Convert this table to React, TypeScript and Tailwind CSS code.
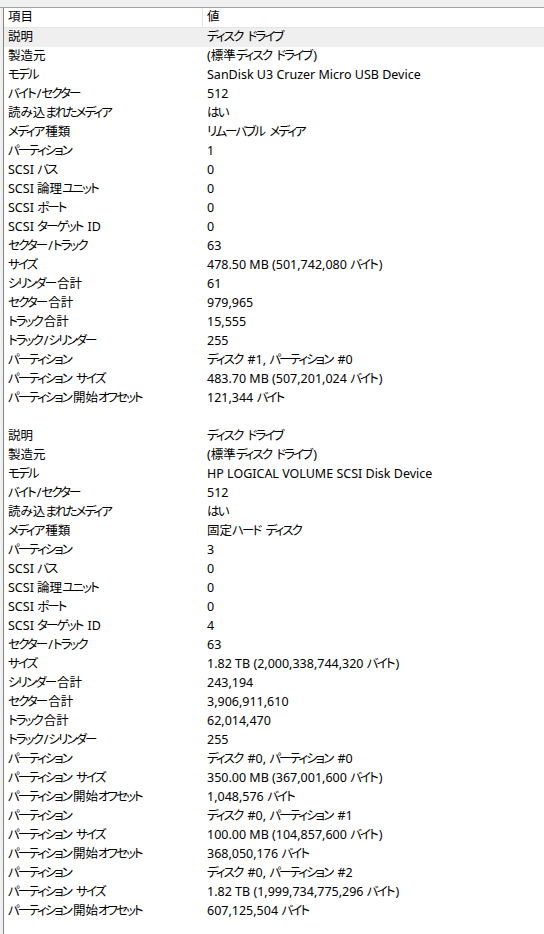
import React from "react";

type Row = [string, string];

const block1: Row[] = [
  ["説明", "ディスク ドライブ"],
  ["製造元", "(標準ディスク ドライブ)"],
  ["モデル", "SanDisk U3 Cruzer Micro USB Device"],
  ["バイト/セクター", "512"],
  ["読み込まれたメディア", "はい"],
  ["メディア種類", "リムーバブル メディア"],
  ["パーティション", "1"],
  ["SCSI バス", "0"],
  ["SCSI 論理ユニット", "0"],
  ["SCSI ポート", "0"],
  ["SCSI ターゲット ID", "0"],
  ["セクター/トラック", "63"],
  ["サイズ", "478.50 MB (501,742,080 バイト)"],
  ["シリンダー合計", "61"],
  ["セクター合計", "979,965"],
  ["トラック合計", "15,555"],
  ["トラック/シリンダー", "255"],
  ["パーティション", "ディスク #1, パーティション #0"],
  ["パーティション サイズ", "483.70 MB (507,201,024 バイト)"],
  ["パーティション開始オフセット", "121,344 バイト"],
];

const block2: Row[] = [
  ["説明", "ディスク ドライブ"],
  ["製造元", "(標準ディスク ドライブ)"],
  ["モデル", "HP LOGICAL VOLUME SCSI Disk Device"],
  ["バイト/セクター", "512"],
  ["読み込まれたメディア", "はい"],
  ["メディア種類", "固定ハード ディスク"],
  ["パーティション", "3"],
  ["SCSI バス", "0"],
  ["SCSI 論理ユニット", "0"],
  ["SCSI ポート", "0"],
  ["SCSI ターゲット ID", "4"],
  ["セクター/トラック", "63"],
  ["サイズ", "1.82 TB (2,000,338,744,320 バイト)"],
  ["シリンダー合計", "243,194"],
  ["セクター合計", "3,906,911,610"],
  ["トラック合計", "62,014,470"],
  ["トラック/シリンダー", "255"],
  ["パーティション", "ディスク #0, パーティション #0"],
  ["パーティション サイズ", "350.00 MB (367,001,600 バイト)"],
  ["パーティション開始オフセット", "1,048,576 バイト"],
  ["パーティション", "ディスク #0, パーティション #1"],
  ["パーティション サイズ", "100.00 MB (104,857,600 バイト)"],
  ["パーティション開始オフセット", "368,050,176 バイト"],
  ["パーティション", "ディスク #0, パーティション #2"],
  ["パーティション サイズ", "1.82 TB (1,999,734,775,296 バイト)"],
  ["パーティション開始オフセット", "607,125,504 バイト"],
];

const font = {
  fontFamily: '"Noto Sans", "Noto Sans CJK JP", sans-serif',
};

function Txt({ s }: { s: string }) {
  const parts = s.split(/([\u3040-\u30FF]+)/);
  return (
    <>
      {parts.map((p, i) =>
        /[\u3040-\u30FF]/.test(p) ? (
          <span key={i} className="tracking-[-1.9px] mr-[1.9px]">
            {p}
          </span>
        ) : (
          <span key={i}>{p}</span>
        )
      )}
    </>
  );
}

function ListRow({ r, selected }: { r: Row; selected?: boolean }) {
  return (
    <div
      className={`flex h-[19px] items-center text-[12.5px] leading-none text-[#000] [font-feature-settings:'palt'] ${
        selected ? "bg-[#efefef]" : ""
      }`}
    >
      <div className="w-[199px] shrink-0 pl-[4px] whitespace-pre">
        <Txt s={r[0]} />
      </div>
      <div className="pl-[4px] whitespace-pre">
        <Txt s={r[1]} />
      </div>
    </div>
  );
}

export default function App() {
  return (
    <div className="w-[544px] h-[934px] bg-[#f0f0f0] overflow-hidden" style={font}>
      <div className="h-[7px] bg-[#f0f0f0]" />
      <div className="flex h-[927px] border-t border-[#a0a0a0]">
        <div className="w-[3px] bg-[#f0f0f0]" />
        <div className="flex-1 border-l border-[#828282] bg-white">
          <div className="flex h-[20px] items-center border-b border-[#e5e5e5] bg-white text-[12.5px] leading-none text-black [font-feature-settings:'palt']">
            <div className="w-[199px] shrink-0 border-r border-[#e5e5e5] h-full flex items-center pl-[4px]">
              項目
            </div>
            <div className="pl-[4px]">値</div>
          </div>
          {block1.map((r, i) => (
            <ListRow key={"a" + i} r={r} selected={i === 0} />
          ))}
          <div className="h-[19px]" />
          {block2.map((r, i) => (
            <ListRow key={"b" + i} r={r} />
          ))}
        </div>
      </div>
    </div>
  );
}
